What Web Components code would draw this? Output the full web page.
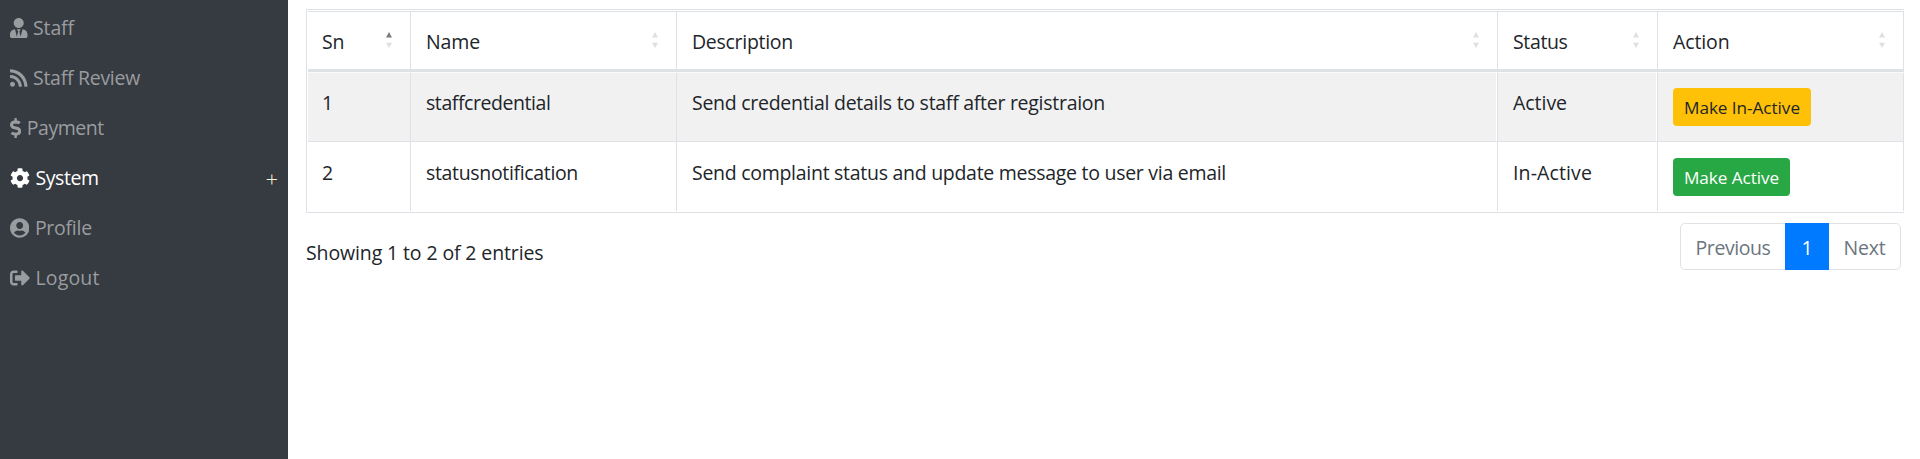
<!DOCTYPE html>
<html lang="en">
<head>
<meta charset="utf-8">
<title>Notification settings</title>
<style>
html,body{margin:0;height:100%;background:#fff}
body{font-family:"Open Sans","Noto Sans",sans-serif;font-size:19.5px;line-height:30px;color:#212529;overflow:hidden}
</style>
</head>
<body>
<app-shell>
  <side-nav slot="nav">
    <nav-item icon="tie" w="41">Staff</nav-item>
    <nav-item icon="rss" w="107">Staff Review</nav-item>
    <nav-item icon="dollar" w="77">Payment</nav-item>
    <nav-item icon="cog" w="63" active>System</nav-item>
    <nav-item icon="user" w="57">Profile</nav-item>
    <nav-item icon="out" w="64">Logout</nav-item>
  </side-nav>
  <data-table></data-table>
  <table-footer></table-footer>
</app-shell>
<script>
function build(el, html) {
  el.attachShadow({mode: 'open'}).innerHTML = html;
  return el.shadowRoot;
}

// Text run tracked so that its advance equals the "w" attribute, in pixels.
customElements.define('fit-text', class extends HTMLElement {
  connectedCallback() {
    if (!this.shadowRoot) build(this, '<style>:host{display:inline-block;white-space:nowrap;font-variant-ligatures:none}</style><slot></slot>');
    requestAnimationFrame(() => this.fit());
    this.fit();
  }
  fit() {
    const w = parseFloat(this.getAttribute('w')), n = this.textContent.length;
    if (!w || !n) return;
    this.style.letterSpacing = '0px';
    const now = this.getBoundingClientRect().width;
    if (now) this.style.letterSpacing = ((w - now) / n).toFixed(4) + 'px';
  }
});

const ICONS = {
  tie: [448, 'M224 256c70.7 0 128-57.3 128-128S294.7 0 224 0 96 57.3 96 128s57.3 128 128 128zm95.8 32.6L272 480l-32-136 32-56h-96l32 56-32 136-47.8-191.4C56.9 292 0 350.3 0 422.4V464c0 26.5 21.5 48 48 48h352c26.5 0 48-21.5 48-48v-41.6c0-72.1-56.9-130.4-128.2-133.8z'],
  rss: [448, 'M128.081 415.959c0 35.369-28.672 64.041-64.041 64.041S0 451.328 0 415.959s28.672-64.041 64.041-64.041 64.04 28.673 64.04 64.041zm175.66 47.25c-8.354-154.6-132.185-278.587-286.95-286.95C7.656 175.765 0 183.105 0 192.253v48.069c0 8.415 6.49 15.472 14.887 16.018 111.832 7.284 201.473 96.702 208.772 208.772.547 8.397 7.604 14.887 16.018 14.887h48.069c9.149.001 16.489-7.655 15.995-16.79zm144.249.288C439.596 229.677 251.465 40.445 16.503 32.01 7.473 31.686 0 38.981 0 48.016v48.068c0 8.625 6.835 15.645 15.453 15.999 191.179 7.839 344.627 161.316 352.465 352.465.353 8.618 7.373 15.453 15.999 15.453h48.068c9.034-.001 16.329-7.474 16.005-16.504z'],
  dollar: [288, 'M209.2 233.4l-108-31.6C88.7 198.2 80 186.5 80 173.5c0-16.3 13.2-29.5 29.5-29.5h66.3c12.2 0 24.2 3.7 34.2 10.5 6.1 4.1 14.3 3.1 19.5-2l34.8-34c7.1-6.9 6.1-18.4-1.8-24.5C238 74.8 207.4 64.1 176 64V16c0-8.8-7.2-16-16-16h-32c-8.8 0-16 7.2-16 16v48h-2.5C45.8 64-5.4 118.7.5 183.6c4.2 46.1 39.4 83.6 83.8 96.6l102.5 30c12.5 3.7 21.2 15.3 21.2 28.3 0 16.3-13.2 29.5-29.5 29.5h-66.3C100 368 88 364.3 78 357.5c-6.1-4.1-14.3-3.1-19.5 2l-34.8 34c-7.1 6.9-6.1 18.4 1.8 24.5 24.5 19.2 55.1 29.9 86.5 30v48c0 8.8 7.2 16 16 16h32c8.8 0 16-7.2 16-16v-48.2c46.6-.9 90.3-28.6 105.7-72.7 21.5-61.6-14.6-124.8-72.5-141.7z'],
  cog: [512, 'M487.4 315.7l-42.6-24.6c4.3-23.2 4.3-47 0-70.2l42.6-24.6c4.9-2.8 7.1-8.6 5.5-14-11.1-35.6-30-67.8-54.7-94.6-3.8-4.1-10-5.1-14.8-2.3L380.8 110c-17.9-15.4-38.5-27.3-60.8-35.1V25.8c0-5.6-3.9-10.5-9.4-11.7-36.7-8.2-74.3-7.8-109.2 0-5.5 1.2-9.4 6.1-9.4 11.7V75c-22.2 7.9-42.8 19.8-60.8 35.1L88.7 85.5c-4.9-2.8-11-1.9-14.8 2.3-24.7 26.7-43.6 58.9-54.7 94.6-1.7 5.4.6 11.2 5.5 14L67.3 221c-4.3 23.2-4.3 47 0 70.2l-42.6 24.6c-4.9 2.8-7.1 8.6-5.5 14 11.1 35.6 30 67.8 54.7 94.6 3.8 4.1 10 5.1 14.8 2.3l42.6-24.6c17.9 15.4 38.5 27.3 60.8 35.1v49.2c0 5.6 3.9 10.5 9.4 11.7 36.7 8.2 74.3 7.8 109.2 0 5.5-1.2 9.4-6.1 9.4-11.7v-49.2c22.2-7.9 42.8-19.8 60.8-35.1l42.6 24.6c4.9 2.8 11 1.9 14.8-2.3 24.7-26.7 43.6-58.9 54.7-94.6 1.5-5.5-.7-11.3-5.6-14.1zM256 336c-44.1 0-80-35.9-80-80s35.9-80 80-80 80 35.9 80 80-35.9 80-80 80z'],
  user: [496, 'M248 8C111 8 0 119 0 256s111 248 248 248 248-111 248-248S385 8 248 8zm0 96c48.6 0 88 39.4 88 88s-39.4 88-88 88-88-39.4-88-88 39.4-88 88-88zm0 344c-58.7 0-111.3-26.6-146.5-68.2 18.8-35.4 55.6-59.8 98.5-59.8 2.4 0 4.8.4 7.1 1.1 13 4.2 26.6 6.9 40.9 6.9 14.3 0 28-2.7 40.9-6.9 2.3-.7 4.7-1.1 7.1-1.1 42.9 0 79.7 24.4 98.5 59.8C359.3 421.4 306.7 448 248 448z'],
  out: [512, 'M497 273L329 441c-15 15-41 4.5-41-17v-96H152c-13.3 0-24-10.7-24-24v-96c0-13.3 10.7-24 24-24h136V88c0-21.4 25.9-32 41-17l168 168c9.3 9.4 9.3 24.6 0 34zM192 436v-40c0-6.6-5.4-12-12-12H96c-17.7 0-32-14.3-32-32V160c0-17.7 14.3-32 32-32h84c6.6 0 12-5.4 12-12V76c0-6.6-5.4-12-12-12H96c-53 0-96 43-96 96v192c0 53 43 96 96 96h84c6.6 0 12-5.4 12-12z']
};

customElements.define('nav-item', class extends HTMLElement {
  connectedCallback() {
    const [vw, d] = ICONS[this.getAttribute('icon')];
    const width = vw === 496 ? 19.4 : vw / 25.6;
    build(this, `<style>
      :host{display:flex;align-items:center;height:50px;padding:0 10px;color:#9a9d9f}
      :host([active]){color:#fff}
      svg{display:block;height:20px;fill:currentColor;margin-right:5.5px;flex:none}
      .plus{margin-left:auto;font-size:22px;font-weight:300;color:#fff3cf}
    </style><svg width="${width}" height="20" viewBox="0 0 ${vw} 512"><path d="${d}"/></svg>
    <fit-text w="${this.getAttribute('w')}">${this.textContent}</fit-text>
    ${this.hasAttribute('active') ? '<span class="plus">+</span>' : ''}`);
  }
});

customElements.define('side-nav', class extends HTMLElement {
  connectedCallback() {
    build(this, `<style>:host{display:flex;flex-direction:column;box-sizing:border-box;padding-top:2.5px;height:100%;background:#363a41}</style><slot></slot>`);
  }
});

customElements.define('app-shell', class extends HTMLElement {
  connectedCallback() {
    build(this, `<style>
      :host{display:grid;grid-template-columns:288px 1fr;height:459px}
      main{padding:9px 16px 0 18px}
    </style><slot name="nav"></slot><main><slot></slot></main>`);
  }
});

customElements.define('sort-arrows', class extends HTMLElement {
  connectedCallback() {
    build(this, `<style>:host{display:block;width:6px;height:16px}svg{display:block}path{fill:#e0e0e0}:host([up]) .u{fill:#7b7c7d}</style>
    <svg width="6" height="16" viewBox="0 0 6 16"><path class="u" d="M3 0l3 5.5H0z"/><path d="M0 10.7h6L3 16z"/></svg>`);
  }
});

customElements.define('action-button', class extends HTMLElement {
  connectedCallback() {
    build(this, `<style>
      :host{display:inline-flex;box-sizing:border-box;height:38px;padding:1px 11px 0;align-items:center;border-radius:4px;font-size:17.2px;line-height:27px;background:#ffc107;color:#212529}
      :host([kind=success]){background:#28a745;color:#fff}
    </style><slot></slot>`);
  }
});

customElements.define('data-table', class extends HTMLElement {
  connectedCallback() {
    const t = (w, s) => `<fit-text w="${w}">${s}</fit-text>`;
    const head = [[22.5,'Sn'],[54,'Name'],[101,'Description'],[54.5,'Status'],[56.5,'Action']];
    build(this, `<style>
      :host{display:block;box-sizing:border-box;height:204px;border:1px solid #dee2e6;border-right:0;padding:1px 0 1px 1px}
      .row{display:grid;grid-template-columns:103px 266px 821px 160px 246px;box-sizing:border-box}
      .row>div{box-sizing:border-box;padding:15px 21px 0 14px;border-right:1px solid #dee2e6;display:flex;align-items:flex-start;justify-content:space-between}
      .row>div:not(:first-child){padding-left:15px}
      .head{height:61px;border-top:1px solid #dee2e6;border-bottom:3px solid #dee2e6}
      .head sort-arrows{margin:5px -3px 0 0}
      .odd{height:70px;border-top:1px solid #fafafa;border-bottom:1px solid #dee2e6;background:#f1f1f1}
      .odd>div:nth-child(n+3):nth-child(-n+4){box-shadow:inset -1px 0 #fff}
      .even{height:69px}
      .row.even>div{padding-top:16px}
    </style>
    <div class="row head">${head.map(([w, s], i) => `<div>${t(w, s)}<sort-arrows${i ? '' : ' up'}></sort-arrows></div>`).join('')}</div>
    <div class="row odd"><div>${t(11,'1')}</div><div>${t(124.5,'staffcredential')}</div><div>${t(413,'Send credential details to staff after registraion')}</div><div>${t(54,'Active')}</div><div><action-button>${t(116,'Make In-Active')}</action-button></div></div>
    <div class="row even"><div>${t(11,'2')}</div><div>${t(152,'statusnotification')}</div><div>${t(534,'Send complaint status and update message to user via email')}</div><div>${t(79,'In-Active')}</div><div><action-button kind="success">${t(95,'Make Active')}</action-button></div></div>`);
  }
});

customElements.define('table-footer', class extends HTMLElement {
  connectedCallback() {
    build(this, `<style>
      :host{display:flex;justify-content:space-between;align-items:flex-start;padding-top:10px}
      .info{margin-top:15px}
      .pager{display:flex;box-sizing:border-box;width:221px;height:47px;margin-right:3px;border:1px solid #dee2e6;border-radius:5px;color:#6c757d}
      .pager span{display:flex;align-items:center;justify-content:center;padding-top:2px}
      .prev{width:104px}.next{flex:1}
      .cur{width:44px;margin:-1px 0;background:#007bff;color:#fff}
    </style>
    <fit-text class="info" w="237.5">Showing 1 to 2 of 2 entries</fit-text>
    <div class="pager"><span class="prev"><fit-text w="75">Previous</fit-text></span><span class="cur"><fit-text w="11">1</fit-text></span><span class="next"><fit-text w="42">Next</fit-text></span></div>`);
  }
});
</script>
</body>
</html>
